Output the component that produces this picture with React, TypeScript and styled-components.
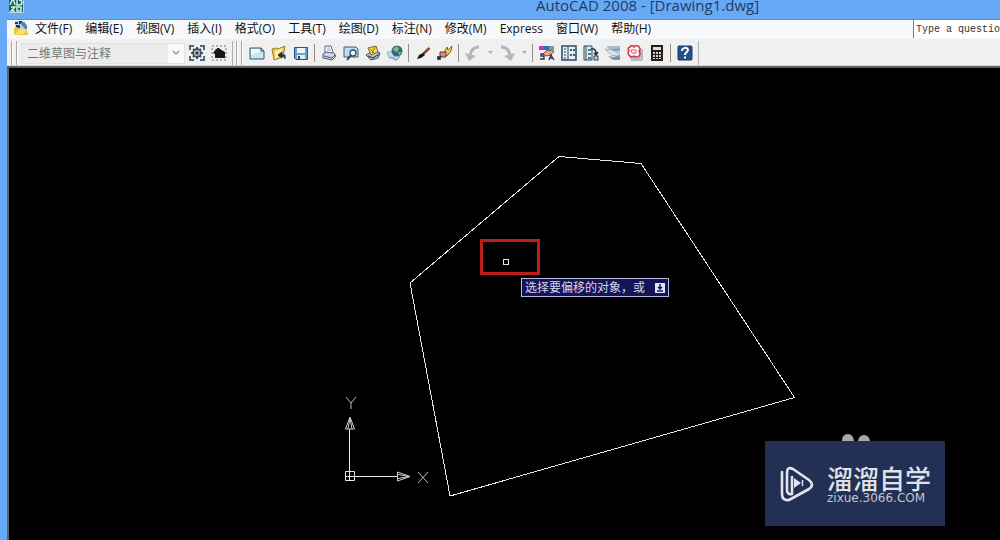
import React from "react";
import styled, { createGlobalStyle } from "styled-components";

const uiFont = `"Open Sans", "Noto Sans CJK SC", sans-serif`;

const GlobalStyle = createGlobalStyle`
  * { box-sizing: border-box; }
  body { margin: 0; background: #68a9f5; font-family: ${uiFont}; overflow: hidden; }
  button, input, select { font: inherit; color: inherit; margin: 0; padding: 0; border: 0; background: none; border-radius: 0; }
  svg { display: block; }
`;

const Window = styled.div`
  display: flex;
  flex-direction: column;
  min-height: 100vh;
  padding-left: 7px;
  background: #68a9f5;
`;

const TitleBar = styled.header`
  display: flex;
  align-items: flex-start;
  height: 19px;
  padding-left: 2px;
  overflow: hidden;
`;

const Title = styled.h1`
  margin: 0 0 0 512px;
  font-size: 15px;
  line-height: 10px;
  font-weight: 400;
  color: #1b3c66;
  white-space: nowrap;
`;

const MenuBar = styled.nav`
  display: flex;
  align-items: stretch;
  height: 20px;
  padding-left: 6px;
  background: #f7f8fa;
  border-top: 1px solid #7d8796;
`;

const MenuList = styled.ul`
  display: flex;
  gap: 13px;
  margin: 0 auto 0 6px;
  padding: 0;
  list-style: none;
`;

const MenuItem = styled.li`
  display: flex;
  align-items: flex-start;
`;

const MenuButton = styled.button`
  font-size: 12px;
  line-height: 18px;
  color: #111;
  white-space: nowrap;
`;

const HelpInput = styled.input`
  width: 87px;
  height: 18px;
  padding-left: 2px;
  flex: none;
  background: #fff;
  border-left: 1px solid #7a7a7a;
  font-family: "Liberation Mono", monospace;
  font-size: 10px;
  color: #333;
`;

const ToolbarRow = styled.div`
  display: flex;
  align-items: stretch;
  height: 27px;
  padding: 2px 0 0 4px;
  background: #f0f0f0;
  border-bottom: 1px solid #d8d8d8;
`;

const Band = styled.div`
  display: flex;
  align-items: center;
  padding-right: 2px;
  margin-right: 3px;
  border-right: 1px solid #b0b0b0;
`;

const Grip = styled.span`
  width: 6px;
  height: 24px;
  margin-right: 4px;
  border: solid #a6a6a6;
  border-width: 0 1px;
  box-shadow: inset 1px 0 #fff, 1px 0 #fff;
`;

const SelectBox = styled.label`
  display: flex;
  align-items: center;
  width: 164px;
  height: 21px;
  margin-right: 1px;
  padding-left: 5px;
  background: #ececec;
  border: 1px solid #e2e2e2;
`;

const WorkspaceSelect = styled.select`
  flex: 1;
  min-width: 0;
  appearance: none;
  font-size: 12px;
  line-height: 19px;
  color: #777;
  outline: 0;
`;

const SelectArrow = styled.span`
  display: grid;
  place-items: center;
  width: 16px;
  height: 19px;
  background: #fbfbfb;
`;

const ToolButton = styled.button<{ $narrow?: boolean }>`
  display: grid;
  place-items: center;
  width: ${(p) => (p.$narrow ? 12 : 22)}px;
  height: 22px;
`;

const Separator = styled.span`
  width: 1px;
  height: 18px;
  margin: 0 3px 0 2px;
  background: #8e8e8e;
`;

const Canvas = styled.main`
  position: relative;
  flex: 1;
  min-height: 472px;
  overflow: hidden;
  background: #000;
  border: solid #5d6066;
  border-width: 2px 0 0 2px;
`;

const Drawing = styled.svg`
  position: absolute;
  inset: 0;
  width: 100%;
  height: 100%;
`;

const DynamicPrompt = styled.div`
  position: absolute;
  left: 512px;
  top: 210px;
  display: flex;
  align-items: center;
  justify-content: space-between;
  width: 148px;
  height: 19px;
  padding: 0 3px;
  background: #151457;
  border: 1px solid #b5b8dc;
  color: #d3d6ee;
  font-size: 12px;
  line-height: 17px;
  white-space: nowrap;
`;

const Watermark = styled.aside`
  position: absolute;
  right: 55px;
  bottom: 14px;
  display: flex;
  align-items: center;
  gap: 12px;
  width: 180px;
  height: 85px;
  padding-left: 15px;
  background: #223055;
  color: #dfe1e6;
`;

const Ears = styled.svg`
  position: absolute;
  left: 76px;
  top: -8px;
`;

const Brand = styled.strong`
  display: block;
  font-family: "Noto Sans CJK SC", sans-serif;
  font-size: 26px;
  line-height: 28px;
  font-weight: 500;
`;

const Site = styled.span`
  display: block;
  font-family: "DejaVu Sans", sans-serif;
  font-size: 12px;
  line-height: 12px;
  color: #c3c7d1;
`;

const icons: Record<string, React.ReactNode> = {
  gear: (
    <>
      <path d="M1 5V1h4M11 1h4v4M15 11v4h-4M5 15H1v-4" fill="none" stroke="#50677d" strokeWidth="2" />
      <path d="M8 2v12M2 8h12M4 4l8 8M12 4l-8 8" stroke="#40566c" strokeWidth="2" />
      <circle cx="8" cy="8" r="4" fill="#9db3c4" stroke="#2c4157" strokeWidth="1.4" />
      <circle cx="8" cy="8" r="1.5" fill="#26394d" />
    </>
  ),
  home: (
    <>
      <rect x="1" y="1" width="14" height="14" fill="none" stroke="#777" strokeDasharray="2 2" />
      <path d="M2 8l3-4h1V3h2l1 1 5 3v6H4V9z" fill="#17181b" />
    </>
  ),
  page: (
    <>
      <path d="M1 3h11l3 3v8H1z" fill="#cbe5ef" stroke="#2f5474" />
      <path d="M2 4h9v3l-9 3z" fill="#eefaff" />
      <path d="M12 3v3h3z" fill="#fff" stroke="#2f5474" />
    </>
  ),
  open: (
    <>
      <path d="M1 4l4-1 2 1 7-3-2 11-9 3z" fill="#e6c650" stroke="#a18325" />
      <path d="M4 6l8-3-2 7-6 4z" fill="#fbefa4" />
      <path d="M7 10l4-3v6zM11 10h3v4" stroke="#24304a" fill="#24304a" />
    </>
  ),
  save: (
    <>
      <path d="M1.500 2.500h13v12H3l-1.500-1.500z" fill="#6ba3cc" stroke="#2b547c" />
      <rect x="4" y="3" width="8" height="5" fill="#e9f4fb" />
      <rect x="4" y="10" width="8" height="4" fill="#dceaf4" />
      <rect x="5" y="11" width="2" height="3" fill="#24476b" />
    </>
  ),
  print: (
    <>
      <path d="M4 8V1h6l2 6" fill="#fff" stroke="#56648a" />
      <path d="M6 3h3M6 5h4" stroke="#8d98b4" />
      <path d="M2 9l3-2 8 1 2 3-4 4-9-2z" fill="#cfd6e4" stroke="#4a587c" />
      <path d="M3 11l8 2 3-3" fill="none" stroke="#4a587c" />
    </>
  ),
  preview: (
    <>
      <path d="M1 2h12l2 2v8H1z" fill="#bedae6" stroke="#3b6183" />
      <circle cx="10" cy="8" r="3" fill="#eefaff" stroke="#35506d" strokeWidth="1.300" />
      <path d="M8 10l-4 5" stroke="#263e5c" strokeWidth="2" />
    </>
  ),
  publish: (
    <>
      <path d="M1 10l8-5 6 3-2 5-7 2z" fill="#bfc9d6" stroke="#3f4d6a" />
      <path d="M3 3l8-2 2 6-7 3z" fill="#f2d958" stroke="#7b6a21" />
      <path d="M5 4l4 4M10 2l-3 6" stroke="#8b7722" />
      <path d="M3 11l5 2 6-4" stroke="#44527a" strokeWidth="1.500" fill="none" />
    </>
  ),
  web: (
    <>
      <path d="M0 7h9l-1 6H2z" fill="#c9dbe6" stroke="#9bb3c4" />
      <circle cx="10" cy="6" r="5.500" fill="#2f6a80" />
      <path d="M6 4l4-3 2 3-2 3-3-1zM11 7l4 0-3 3z" fill="#86b88c" />
      <path d="M3 12l6 3 4-4" fill="none" stroke="#8faac0" strokeWidth="1.500" />
    </>
  ),
  brush: (
    <>
      <path d="M14.500 3L8 9" stroke="#7a4a2f" strokeWidth="2.400" />
      <path d="M8 8l2 2-4 3-4 1 2-4z" fill="#17171a" />
    </>
  ),
  match: (
    <>
      <path d="M7 8L10 2l1 3 4-4-1 5-4 5z" fill="#ecd14a" stroke="#7d671c" />
      <path d="M3 7h6v5H3z" fill="#dd8a77" stroke="#6f352f" />
      <path d="M1 14l3-3M1 11v3h3" stroke="#15254c" strokeWidth="1.600" fill="none" />
    </>
  ),
  undo: (
    <>
      <path d="M14 2Q6 2 5 11" fill="none" stroke="#b4b6b9" strokeWidth="3" />
      <path d="M0 8l11 3-7 5z" fill="#b4b6b9" />
    </>
  ),
  redo: (
    <>
      <path d="M2 2Q10 2 11 11" fill="none" stroke="#b4b6b9" strokeWidth="3" />
      <path d="M16 8L5 11l7 5z" fill="#b4b6b9" />
    </>
  ),
  properties: (
    <>
      <path d="M0 1h5v4H0z" fill="#c733bd" />
      <path d="M5 1h5v4H5z" fill="#3564c8" />
      <path d="M10 1h5v4h-5z" fill="#4eb28b" />
      <path d="M4 9l4-4 7 1-3 4-5 1z" fill="#e4a596" stroke="#924b46" />
      <path d="M5 9H2v2h3v3H1M10 15l2-5 3 5M11 13h3" fill="none" stroke="#27355b" strokeWidth="1.300" />
    </>
  ),
  designCenter: (
    <>
      <rect x="1" y="1" width="14" height="14" fill="#e6f1f4" stroke="#294a60" strokeWidth="1.500" />
      <path d="M7 1v14" stroke="#294a60" />
      <path d="M3 4h2M3 7h2M3 10h2M3 13h2" stroke="#294a60" />
      <path d="M9 4h2v2H9zM12 4h2v2h-2zM9 9h2v2H9zM12 9h2v2h-2z" fill="#335f78" />
    </>
  ),
  palettes: (
    <>
      <path d="M1 1h8v14H1z" fill="#dfecef" stroke="#294a60" />
      <path d="M3 1v14" stroke="#294a60" />
      <path d="M5 4h3v2H5zM5 8h3v2H5zM5 12h3v2H5z" fill="#50798f" />
      <path d="M8 4c4-1 5 2 5 5M11 8l2 2 2-3" fill="none" stroke="#1f3048" strokeWidth="1.500" />
      <rect x="11" y="11" width="4" height="4" fill="#bdd4df" stroke="#294a60" />
    </>
  ),
  sheets: (
    <>
      <path d="M1 1h14v6L8 8z" fill="#a9bdca" />
      <path d="M0 4l7 1 8 4-3 2-6-1z" fill="#dce6ec" stroke="#9eb2c0" />
      <path d="M3 11l6 1 6-2v5H8z" fill="#7e9cb3" />
      <path d="M8 5l7-1M9 13h6" stroke="#6586a0" />
    </>
  ),
  markup: (
    <>
      <path d="M4 15h11V4M3 13h10V3" fill="none" stroke="#7c8793" />
      <path d="M3 2q2-3 4 0q3-3 5 0q2 2 0 4q2 3 0 5q-3 2-5 0q-3 2-5-1q-2-2 0-4q-2-3 1-4z" fill="#fff1f1" stroke="#cf3447" strokeWidth="1.500" />
      <path d="M4 5h5v3H5z" fill="none" stroke="#d85a68" />
    </>
  ),
  calculator: (
    <>
      <rect x="2" y="0" width="12" height="16" fill="#221e1c" />
      <rect x="4" y="2" width="8" height="3" fill="#e6ddd6" />
      <path d="M4 7h2v2H4zM7 7h2v2H7zM10 7h2v2h-2zM4 10h2v2H4zM7 10h2v2H7zM10 10h2v2h-2zM4 13h2v1H4zM7 13h2v1H7zM10 13h2v1h-2z" fill="#d8cdc5" />
    </>
  ),
  help: (
    <>
      <rect x="1" y="1" width="14" height="14" rx="1" fill="#24518a" stroke="#183a66" />
      <path d="M5 6c0-4 6-4 6-1c0 2-3 2-3 5M8 11.500v2" fill="none" stroke="#fff" strokeWidth="2" />
    </>
  ),
};

const Icon = ({ name }: { name: string }) => (
  <svg width="16" height="16" viewBox="0 0 16 16" aria-hidden="true">{icons[name]}</svg>
);

const Chevron = ({ solid }: { solid?: boolean }) => (
  <svg width="8" height="6" viewBox="0 0 8 6" aria-hidden="true">
    {solid ? <path d="M2 1h5L4.500 4z" fill="#aaa" /> : <path d="M1 1l3 3 3-3" fill="none" stroke="#999" strokeWidth="1.500" />}
  </svg>
);

const menus = ["文件(F)", "编辑(E)", "视图(V)", "插入(I)", "格式(O)", "工具(T)", "绘图(D)", "标注(N)", "修改(M)", "Express", "窗口(W)", "帮助(H)"];

const tools: [string, string][] = [
  ["page", "新建"], ["open", "打开"], ["save", "保存"], ["|", ""],
  ["print", "打印"], ["preview", "打印预览"], ["publish", "发布"], ["web", "三维 DWF"], ["|", ""],
  ["brush", "特性匹配"], ["match", "块编辑器"], ["|", ""],
  ["undo", "放弃"], ["v", "放弃列表"], ["redo", "重做"], ["v", "重做列表"], ["|", ""],
  ["properties", "特性"], ["designCenter", "设计中心"], ["palettes", "工具选项板"], ["sheets", "图纸集管理器"],
  ["markup", "标记集管理器"], ["calculator", "快速计算器"], ["|", ""], ["help", "帮助"],
];

export default function App() {
  return (
    <Window>
      <GlobalStyle />
      <TitleBar>
        <svg width="15" height="13" viewBox="0 3 15 13" aria-hidden="true">
          <rect width="15" height="16" fill="#15635d" />
          <path d="M1 8l3-7 2 7M8 2v6h2c4 0 4-5 0-5M2 10h4l-4 4h4M8 10v4h4v-4z" fill="none" stroke="#d8f0e9" strokeWidth="1.500" />
          <path d="M0 15.500h15M14.500 0v16" stroke="#b9dbd5" />
        </svg>
        <Title>AutoCAD 2008 - [Drawing1.dwg]</Title>
      </TitleBar>

      <MenuBar aria-label="菜单栏">
        <svg width="16" height="18" viewBox="0 0 16 18" aria-hidden="true">
          <path d="M2 1h9l3 4v8H2z" fill="#b8d4e6" />
          <path d="M2 2h3v2H2zM6 1h3v3H6zM3 5h4v3H3z" fill="#183e5c" />
          <path d="M7 3l4-1 3 4v5z" fill="#4f7fa4" />
          <path d="M1 8l3-1 3 3 7-1 1 6H1z" fill="#edc534" />
          <path d="M1 15l5-5 8-1-3 5z" fill="#f8df70" />
        </svg>
        <MenuList>
          {menus.map((m) => <MenuItem key={m}><MenuButton type="button">{m}</MenuButton></MenuItem>)}
        </MenuList>
        <HelpInput aria-label="Help" defaultValue="Type a question for help" />
      </MenuBar>

      <ToolbarRow>
        <Band>
          <Grip />
          <SelectBox>
            <WorkspaceSelect aria-label="工作空间"><option>二维草图与注释</option></WorkspaceSelect>
            <SelectArrow><Chevron /></SelectArrow>
          </SelectBox>
          <ToolButton type="button" aria-label="工作空间设置"><Icon name="gear" /></ToolButton>
          <ToolButton type="button" aria-label="我的工作空间"><Icon name="home" /></ToolButton>
        </Band>
        <Band>
          <Grip />
          {tools.map(([name, label], i) => {
            if (name === "|") return <Separator key={i} />;
            if (name === "v") return <ToolButton key={i} type="button" $narrow aria-label={label}><Chevron solid /></ToolButton>;
            return <ToolButton key={i} type="button" aria-label={label}><Icon name={name} /></ToolButton>;
          })}
        </Band>
      </ToolbarRow>

      <Canvas>
        <Drawing aria-label="Drawing1">
          <g transform="translate(-9 -68)" fill="none" stroke="#e8e8e8">
            <path d="M410 283L559 156.500L641 163.500L794.500 397.500L450 496z" shapeRendering="crispEdges" />
            <path d="M345.500 471.500h9v9h-9zM349.500 429v51M345 476.500h52" />
            <path d="M350 417l4.500 12h-9zM350 418l-2 11M350 418l2 11M410 476.500l-12.500-4.500v9zM409 476.500l-11-2M409 476.500l-11 2" stroke="#cfcfcf" />
            <path d="M346 397l5 6 5-6M351 403v6M418 472l10 11M428 472l-10 11" stroke="#bdbdbd" />
            <rect x="481.500" y="240.500" width="57" height="33" stroke="#bd201c" strokeWidth="3" />
            <rect x="503.500" y="259.500" width="5" height="5" />
          </g>
        </Drawing>
        <DynamicPrompt role="tooltip">
          选择要偏移的对象，或
          <svg width="10" height="10" viewBox="0 0 10 10" aria-hidden="true">
            <rect width="10" height="10" fill="#dfe4fa" />
            <path d="M5 1v4M3 4l2 2 2-2M2 8h6" fill="none" stroke="#151457" strokeWidth="1.500" />
          </svg>
        </DynamicPrompt>
        <Watermark>
          <Ears width="30" height="8" viewBox="0 0 30 8" aria-hidden="true">
            <path d="M1 8Q1 1 7 1Q12 1 13 8zM17 8Q18 2 23 2Q28 2 29 8z" fill="#aaa9a8" />
          </Ears>
          <svg width="35" height="36" viewBox="0 0 35 36" aria-hidden="true">
            <path d="M2 6v22q0 7 7 6l20-11q6-4 0-9L13 3Q7 0 7 7v18q1 4 5 3V11" fill="none" stroke="#e1e4ea" strokeWidth="2.600" strokeLinecap="round" strokeLinejoin="round" />
            <path d="M14 12l7 5-7 5z" fill="#e1e4ea" />
            <path d="M22.500 14v6" stroke="#e1e4ea" strokeWidth="1.500" />
          </svg>
          <div>
            <Brand>溜溜自学</Brand>
            <Site>zixue.3066.COM</Site>
          </div>
        </Watermark>
      </Canvas>
    </Window>
  );
}
